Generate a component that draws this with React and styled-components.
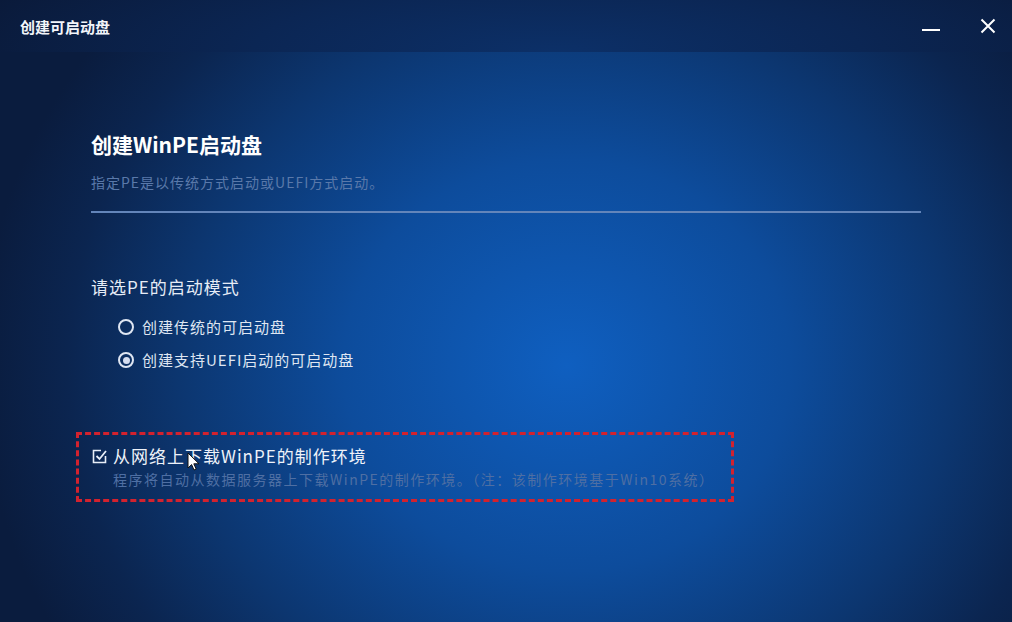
import React, { useState } from 'react';
import styled, { createGlobalStyle } from 'styled-components';

const GlobalStyle = createGlobalStyle`
    html, body {
        margin: 0;
        padding: 0;
        background: #0a1d40;
    }
    body {
        font-family: "Noto Sans CJK SC", "Noto Sans", sans-serif;
    }
`;

const modes = [
    { id: 'legacy', label: '创建传统的可启动盘' },
    { id: 'uefi', label: '创建支持UEFI启动的可启动盘' },
];

function App() {
    const [mode, setMode] = useState('uefi');
    const [download, setDownload] = useState(true);

    return (
        <>
            <GlobalStyle />
            <Window>
                <TitleBar>
                    <h1>创建可启动盘</h1>
                    <div className="controls">
                        <WinButton aria-label="minimize">
                            <svg width="18" height="18" viewBox="0 0 18 18">
                                <path d="M0 13h18" stroke="#fff" strokeWidth="2" />
                            </svg>
                        </WinButton>
                        <WinButton aria-label="close">
                            <svg width="16" height="16" viewBox="0 0 16 16">
                                <path d="M1.5 1.5l13 13M14.5 1.5l-13 13" stroke="#fff" strokeWidth="2" />
                            </svg>
                        </WinButton>
                    </div>
                </TitleBar>
                <Body>
                    <Header>
                        <h2>创建WinPE启动盘</h2>
                        <p>指定PE是以传统方式启动或UEFI方式启动。</p>
                    </Header>
                    <Section>
                        <h3>请选PE的启动模式</h3>
                        <Options>
                            {modes.map((m) => (
                                <Radio key={m.id} onClick={() => setMode(m.id)}>
                                    <Dot $checked={mode === m.id} />
                                    {m.label}
                                </Radio>
                            ))}
                        </Options>
                    </Section>
                    <Highlight>
                        <CheckRow onClick={() => setDownload(!download)}>
                            <svg width="15" height="15" viewBox="0 0 15 15">
                                <path d="M9 1.5H1.5v12h12V7" fill="none" stroke="#e8eef8" strokeWidth="1.6" />
                                {download && (
                                    <path d="M4.5 7l3 3 6.5-8" fill="none" stroke="#e8eef8" strokeWidth="1.8" />
                                )}
                            </svg>
                            <span>从网络上下载WinPE的制作环境</span>
                            <Pointer viewBox="0 0 12 19" width="12" height="19">
                                <path d="M1 1v15l3.6-3.4 2.4 5.4 2.2-1-2.4-5.2H12z" fill="#fff" stroke="#111" strokeWidth="1" />
                            </Pointer>
                        </CheckRow>
                        <Hint>程序将自动从数据服务器上下载WinPE的制作环境。（注：该制作环境基于Win10系统）</Hint>
                    </Highlight>
                </Body>
            </Window>
        </>
    );
}

const Window = styled.div`
    width: 1012px;
    height: 622px;
    display: flex;
    flex-direction: column;
    overflow: hidden;
    color: #fff;
`;

const TitleBar = styled.div`
    height: 52px;
    flex-shrink: 0;
    display: flex;
    align-items: center;
    justify-content: space-between;
    padding: 0 8px 0 20px;
    background: radial-gradient(ellipse 60% 260% at 55% 100%, #0c3068 0%, #0b2654 50%, #0a1a3a 100%);
    h1 {
        margin: 0;
        font-size: 15px;
        font-weight: 700;
        color: #f2f5fa;
    }
    .controls {
        display: flex;
        gap: 25px;
    }
`;

const WinButton = styled.button`
    width: 32px;
    height: 32px;
    padding: 0;
    border: none;
    background: transparent;
    display: flex;
    align-items: center;
    justify-content: center;
    cursor: pointer;
`;

const Body = styled.div`
    flex: 1;
    padding: 76px 91px 0 91px;
    background: radial-gradient(ellipse 58% 95% at 56% 55%, #0f5fc0 0%, #0d4c9c 38%, #0c3670 66%, #0b2550 85%, #0a1c3e 100%);
`;

const Header = styled.div`
    width: 830px;
    padding-bottom: 19px;
    border-bottom: 2px solid #6385ba;
    h2 {
        margin: 0;
        font-size: 21px;
        font-weight: 700;
        line-height: 32px;
        color: #ffffff;
    }
    p {
        margin: 12px 0 0;
        font-size: 14px;
        letter-spacing: 1px;
        line-height: 20px;
        color: #5a79aa;
    }
`;

const Section = styled.div`
    margin-top: 61px;
    h3 {
        margin: 0;
        font-size: 17px;
        font-weight: 400;
        letter-spacing: 1px;
        line-height: 26px;
        color: #e6ecf6;
    }
`;

const Options = styled.div`
    display: flex;
    flex-direction: column;
    gap: 11px;
    margin-top: 16px;
    padding-left: 27px;
`;

const Radio = styled.label`
    display: flex;
    align-items: center;
    gap: 8px;
    font-size: 15px;
    letter-spacing: 1px;
    line-height: 22px;
    color: #dfe6f2;
    cursor: pointer;
`;

const Dot = styled.span`
    width: 12px;
    height: 12px;
    border-radius: 50%;
    border: 2px solid #dfe6f2;
    display: flex;
    align-items: center;
    justify-content: center;
    &::after {
        content: '';
        width: 7px;
        height: 7px;
        border-radius: 50%;
        background: ${(p) => (p.$checked ? '#d6def0' : 'transparent')};
    }
`;

const Highlight = styled.div`
    position: relative;
    margin: 61px 0 0 -15px;
    width: 639px;
    height: 56px;
    padding: 8px 0 0 13px;
    border: 3px dashed #d3222e;
`;

const CheckRow = styled.label`
    position: relative;
    display: flex;
    align-items: center;
    gap: 6px;
    font-size: 17px;
    letter-spacing: 1px;
    line-height: 26px;
    color: #eef2f9;
    cursor: pointer;
`;

const Pointer = styled.svg`
    position: absolute;
    left: 95px;
    top: 9px;
`;

const Hint = styled.div`
    padding-left: 21px;
    font-size: 14px;
    letter-spacing: 1.5px;
    line-height: 20px;
    color: #4f6fa3;
`;

export default App;
